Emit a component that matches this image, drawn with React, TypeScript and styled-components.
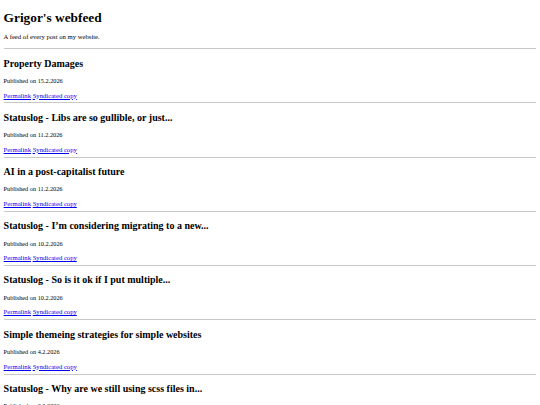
import React from "react";
import styled, { createGlobalStyle } from "styled-components";

const GlobalStyle = createGlobalStyle`
    body {
        margin: 0;
        padding: 0 3.6px;
        font-family: "Liberation Serif", "Times New Roman", serif;
        font-size: 6.67px;
        line-height: 1.15;
        color: #000;
        background: #fff;
    }
`;

const PageTitle = styled.h1`
    font-size: 13.33px;
    font-weight: bold;
    margin: 9.6px 0 0;
`;

const Intro = styled.p`
    font-size: 6.67px;
    margin: 8.25px 0 7.4px;
`;

const Divider = styled.hr`
    border: none;
    height: 1px;
    background: #c8c8c8;
    margin: 3.2px 0 0;
`;

const PostTitle = styled.h2`
    font-size: 10px;
    font-weight: bold;
    margin: 8.4px 0 0;
`;

const Published = styled.p`
    font-size: 6.25px;
    margin: 7.9px 0 0;
`;

const Links = styled.p`
    font-size: 6.67px;
    margin: 7.4px 0 0;
`;

const Link = styled.a`
    color: #0000ee;
    text-decoration: underline;
`;

interface Post {
    title: string;
    date: string;
}

const posts: Post[] = [
    { title: "Property Damages", date: "15.2.2026" },
    { title: "Statuslog - Libs are so gullible, or just...", date: "11.2.2026" },
    { title: "AI in a post-capitalist future", date: "11.2.2026" },
    { title: "Statuslog - I\u2019m considering migrating to a new...", date: "10.2.2026" },
    { title: "Statuslog - So is it ok if I put multiple...", date: "10.2.2026" },
    { title: "Simple themeing strategies for simple websites", date: "4.2.2026" },
    { title: "Statuslog - Why are we still using scss files in...", date: "3.2.2026" },
];

const PostEntry: React.FC<{ post: Post }> = ({ post }) => (
    <article>
        <Divider />
        <PostTitle>{post.title}</PostTitle>
        <Published>Published on {post.date}</Published>
        <Links>
            <Link href="#">Permalink</Link> <Link href="#">Syndicated copy</Link>
        </Links>
    </article>
);

const App: React.FC = () => (
    <>
        <GlobalStyle />
        <header>
            <PageTitle>Grigor's webfeed</PageTitle>
            <Intro>A feed of every post on my website.</Intro>
        </header>
        <main>
            {posts.map((post, i) => (
                <PostEntry key={i} post={post} />
            ))}
        </main>
    </>
);

export default App;
